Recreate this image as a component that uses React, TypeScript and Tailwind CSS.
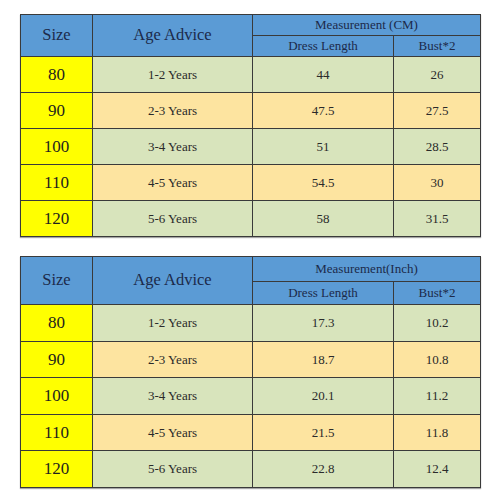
import React from "react";

type Row = { size: string; age: string; len: string; bust: string };

const cm: Row[] = [
  { size: "80", age: "1-2 Years", len: "44", bust: "26" },
  { size: "90", age: "2-3 Years", len: "47.5", bust: "27.5" },
  { size: "100", age: "3-4 Years", len: "51", bust: "28.5" },
  { size: "110", age: "4-5 Years", len: "54.5", bust: "30" },
  { size: "120", age: "5-6 Years", len: "58", bust: "31.5" },
];

const inch: Row[] = [
  { size: "80", age: "1-2 Years", len: "17.3", bust: "10.2" },
  { size: "90", age: "2-3 Years", len: "18.7", bust: "10.8" },
  { size: "100", age: "3-4 Years", len: "20.1", bust: "11.2" },
  { size: "110", age: "4-5 Years", len: "21.5", bust: "11.8" },
  { size: "120", age: "5-6 Years", len: "22.8", bust: "12.4" },
];

function SizeTable({ title, rows, top, sub, rowH }: { title: string; rows: Row[]; top: string; sub: string; rowH: string }) {
  const cell = "border border-[#3a3a3a] text-center p-0 font-['Liberation_Serif',Times,serif]";
  return (
    <table className="border-collapse table-fixed w-[460px] shadow-[0_1px_1px_rgba(0,0,0,0.35)] font-['Liberation_Serif',Times,serif]">
      <colgroup>
        <col className="w-[72px]" />
        <col className="w-[160px]" />
        <col className="w-[141px]" />
        <col className="w-[87px]" />
      </colgroup>
      <thead className="bg-[#5b9bd5] text-[#1c2a4a]">
        <tr className={top}>
          <th rowSpan={2} className={`${cell} font-normal text-[16.5px]`}>Size</th>
          <th rowSpan={2} className={`${cell} font-normal text-[16.5px]`}>Age Advice</th>
          <th colSpan={2} className={`${cell} font-normal text-[13px]`}>{title}</th>
        </tr>
        <tr className={sub}>
          <th className={`${cell} font-normal text-[13px]`}>Dress Length</th>
          <th className={`${cell} font-normal text-[13px]`}>Bust*2</th>
        </tr>
      </thead>
      <tbody className="text-[#2a2a2a]">
        {rows.map((r, i) => {
          const bg = i % 2 === 0 ? "bg-[#d8e4bc]" : "bg-[#fde4a0]";
          return (
            <tr key={r.size} className={rowH}>
              <td className={`${cell} bg-[#ffff00] text-[17px] text-[#1e1e1e]`}>{r.size}</td>
              <td className={`${cell} ${bg} text-[13px]`}>{r.age}</td>
              <td className={`${cell} ${bg} text-[13px]`}>{r.len}</td>
              <td className={`${cell} ${bg} text-[13px]`}>{r.bust}</td>
            </tr>
          );
        })}
      </tbody>
    </table>
  );
}

export default function App() {
  return (
    <div className="w-[500px] h-[500px] bg-white pl-[20px] pt-[14px] flex flex-col gap-[19px]">
      <SizeTable title="Measurement (CM)" rows={cm} top="h-[21px]" sub="h-[21px]" rowH="h-[36px]" />
      <SizeTable title="Measurement(Inch)" rows={inch} top="h-[25px]" sub="h-[23px]" rowH="h-[36.5px]" />
    </div>
  );
}
